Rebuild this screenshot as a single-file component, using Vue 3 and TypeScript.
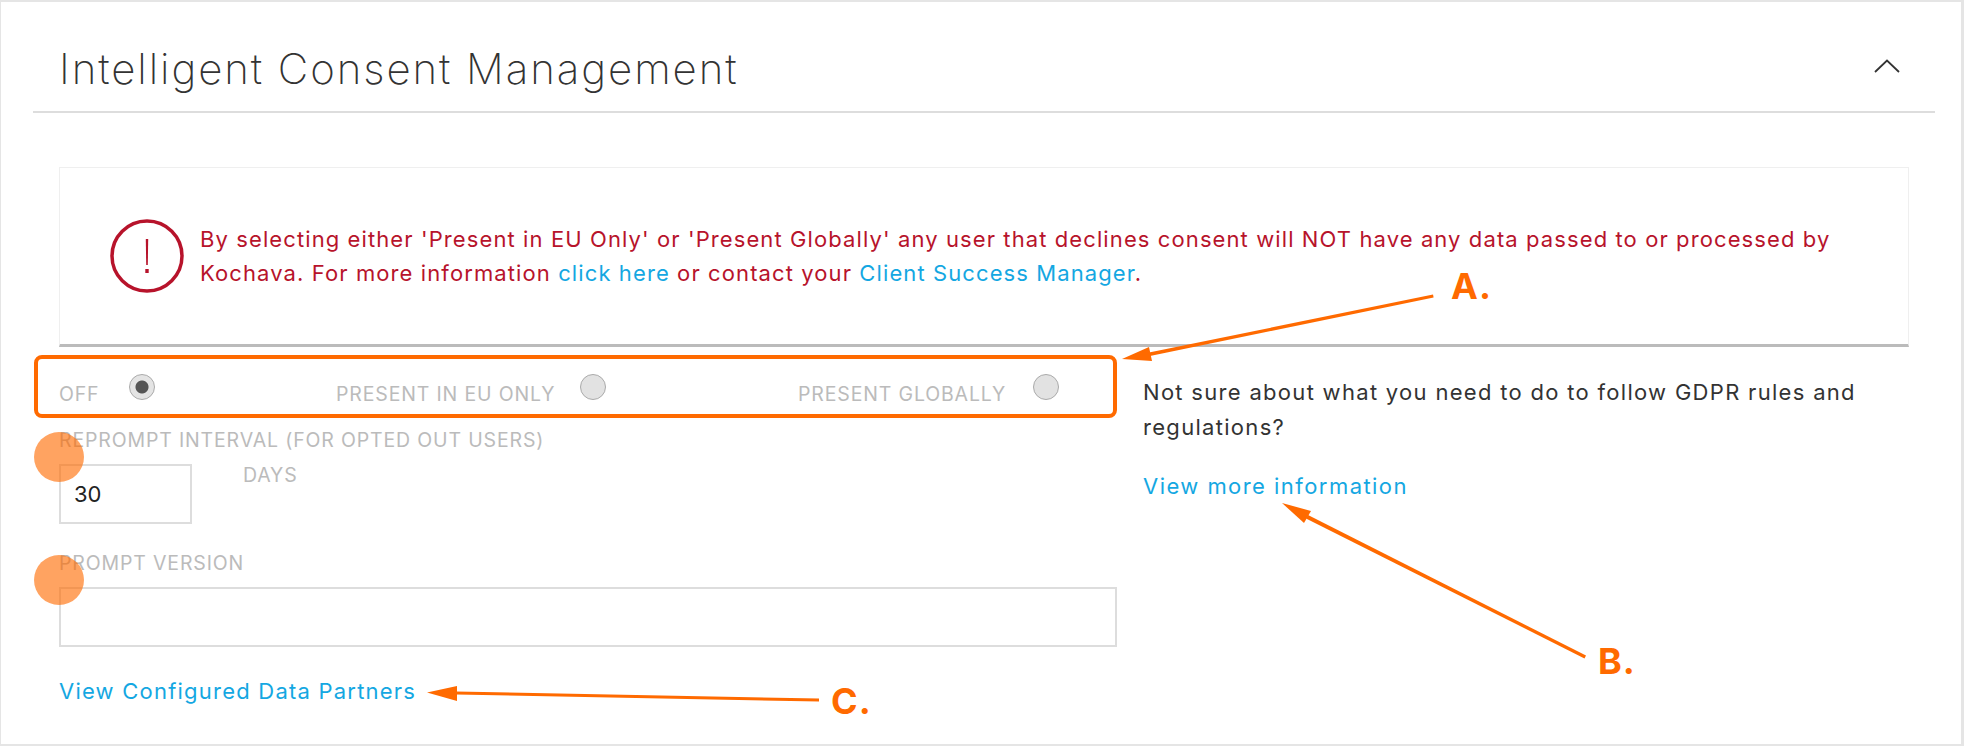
<script setup lang="ts">
const options = [
  { label: 'OFF', selected: true, cls: 'opt-off' },
  { label: 'PRESENT IN EU ONLY', selected: false, cls: 'opt-eu' },
  { label: 'PRESENT GLOBALLY', selected: false, cls: 'opt-global' },
]
</script>

<template>
  <div class="page">
    <header class="head">
      <h1 class="title">Intelligent Consent Management</h1>
      <svg class="chevron" width="26" height="14" viewBox="0 0 26 14">
        <path d="M1 13 L13 1.5 L25 13" fill="none" stroke="#333" stroke-width="1.8" />
      </svg>
    </header>

    <section class="alert">
      <svg class="alert-icon" width="74" height="74" viewBox="0 0 74 74">
        <circle cx="37" cy="37" r="35" fill="none" stroke="#b7132b" stroke-width="3.5" />
        <path d="M35.8 20 H38.2 L37.8 46 H36.2 Z" fill="#b7132b" />
        <rect x="35.3" y="50" width="3.4" height="4" fill="#b7132b" />
      </svg>
      <p class="alert-text">
        By selecting either 'Present in EU Only' or 'Present Globally' any user that declines consent will NOT have any data passed to or processed by Kochava. For more information
        <a class="link">click here</a> or contact your <a class="link">Client Success Manager</a>.
      </p>
    </section>

    <div class="columns">
      <div class="left">
        <div class="options">
          <div v-for="o in options" :key="o.label" class="option" :class="o.cls">
            <span class="label">{{ o.label }}</span>
            <span class="radio" :class="{ on: o.selected }"></span>
          </div>
        </div>

        <div class="field reprompt">
          <div class="label">REPROMPT INTERVAL (FOR OPTED OUT USERS)</div>
          <div class="reprompt-row">
            <div class="input small">30</div>
            <span class="label days">DAYS</span>
          </div>
          <span class="dot"></span>
        </div>

        <div class="field version">
          <div class="label">PROMPT VERSION</div>
          <div class="input wide"></div>
          <span class="dot"></span>
        </div>

        <a class="link partners">View Configured Data Partners</a>
      </div>

      <aside class="right">
        <p class="help">Not sure about what you need to do to follow GDPR rules and regulations?</p>
        <a class="link more">View more information</a>
      </aside>
    </div>

    <svg class="arrows" width="1964" height="746" viewBox="0 0 1964 746">
      <g fill="#ff6a00">
        <path d="M1149 352.5 L1433 294.5 L1433.6 297.5 L1150 356 Z" />
        <path d="M1122 359 L1149 347 L1152 361 Z" />
        <path d="M1586 655.5 L1308 515 L1306 518.5 L1584.5 658.5 Z" />
        <path d="M1282 503 L1311 511 L1304 523 Z" />
        <path d="M819 698.5 L456 691.5 L456 694.5 L819 701.5 Z" />
        <path d="M427 692.5 L457 686 L457 701 Z" />
      </g>
    </svg>
    <span class="tag tag-a">A.</span>
    <span class="tag tag-b">B.</span>
    <span class="tag tag-c">C.</span>
  </div>
</template>

<style>
html, body { margin: 0; padding: 0; background: #fff; }
</style>

<style scoped>
.page {
  position: relative;
  box-sizing: border-box;
  width: 1964px;
  height: 746px;
  border: solid #e5e5e5;
  border-width: 2px 3px 2px 1px;
  overflow: hidden;
  font-family: Inter, "Liberation Sans", sans-serif;
  color: #333;
  background: #fff;
}
.head {
  display: flex;
  align-items: center;
  justify-content: space-between;
  box-sizing: border-box;
  width: 1902px;
  height: 111px;
  margin-left: 32px;
  padding: 24px 35px 0 26px;
  border-bottom: 2px solid #ddd;
}
.title {
  margin: 0;
  font-weight: 200;
  font-size: 42px;
  letter-spacing: 1.93px;
  color: #333;
}
.chevron { margin-top: -6px; }
.alert {
  display: flex;
  align-items: center;
  box-sizing: border-box;
  width: 1850px;
  height: 180px;
  margin: 54px 0 0 58px;
  padding: 0 60px 0 50px;
  border: 1px solid #efefef;
  border-bottom: 3px solid #bbb;
}
.alert-icon { flex: none; margin-right: 16px; }
.alert-text {
  margin: 0;
  font-size: 22px;
  line-height: 34px;
  letter-spacing: 1.1px;
  color: #b7132b;
}
.link { color: #14a7e2; }
.columns { display: flex; }
.left { width: 1059px; margin-left: 33px; flex: none; }
.options {
  display: flex;
  box-sizing: border-box;
  width: 1083px;
  height: 63px;
  margin-top: 8px;
  border: 4px solid #ff6a00;
  border-radius: 8px;
  padding-left: 21px;
  position: relative;
}
.option { display: flex; }
.label { font-size: 19.5px; letter-spacing: 0.85px; color: #bbb; line-height: 22px; }
.options .label { margin-top: 24px; }
.radio {
  box-sizing: border-box;
  width: 26px;
  height: 26px;
  margin-top: 15px;
  border-radius: 50%;
  border: 1px solid #aaa;
  background: #e2e2e2;
}
.radio.on { background: radial-gradient(circle, #555 0 6px, #e4e4e4 7px); }
.opt-off { width: 277px; gap: 30px; }
.opt-eu { width: 462px; gap: 25px; }
.opt-global { gap: 27px; }
.field { position: relative; margin-left: 25px; }
.reprompt { margin-top: 11px; }
.reprompt-row { display: flex; margin-top: 13px; }
.input {
  box-sizing: border-box;
  height: 60px;
  border: 2px solid #ddd;
  font-size: 22px;
  line-height: 56px;
  color: #222;
  padding-left: 13px;
}
.small { width: 133px; }
.wide { width: 1058px; }
.days { margin-left: 51px; margin-top: 0; }
.version { margin-top: 28px; }
.version .label { margin-bottom: 13px; }
.dot {
  position: absolute;
  left: -25px;
  top: 3px;
  width: 50px;
  height: 50px;
  border-radius: 50%;
  background: rgba(255, 106, 0, 0.62);
}
.partners {
  display: block;
  margin: 31px 0 0 25px;
  font-size: 22px;
  letter-spacing: 1.22px;
}
.right { margin-left: 50px; width: 760px; }
.help { margin: 28px 0 0; font-size: 22px; line-height: 35px; letter-spacing: 1.3px; color: #333; }
.more { display: block; margin-top: 28px; font-size: 22px; letter-spacing: 1.45px; }
.arrows { position: absolute; left: -1px; top: -2px; pointer-events: none; }
.tag {
  position: absolute;
  font-size: 36px;
  font-weight: 700;
  letter-spacing: 1px;
  color: #ff6a00;
  line-height: 36px;
}
.tag-a { left: 1450px; top: 266px; }
.tag-b { left: 1597px; top: 641px; }
.tag-c { left: 830px; top: 681px; }
</style>
